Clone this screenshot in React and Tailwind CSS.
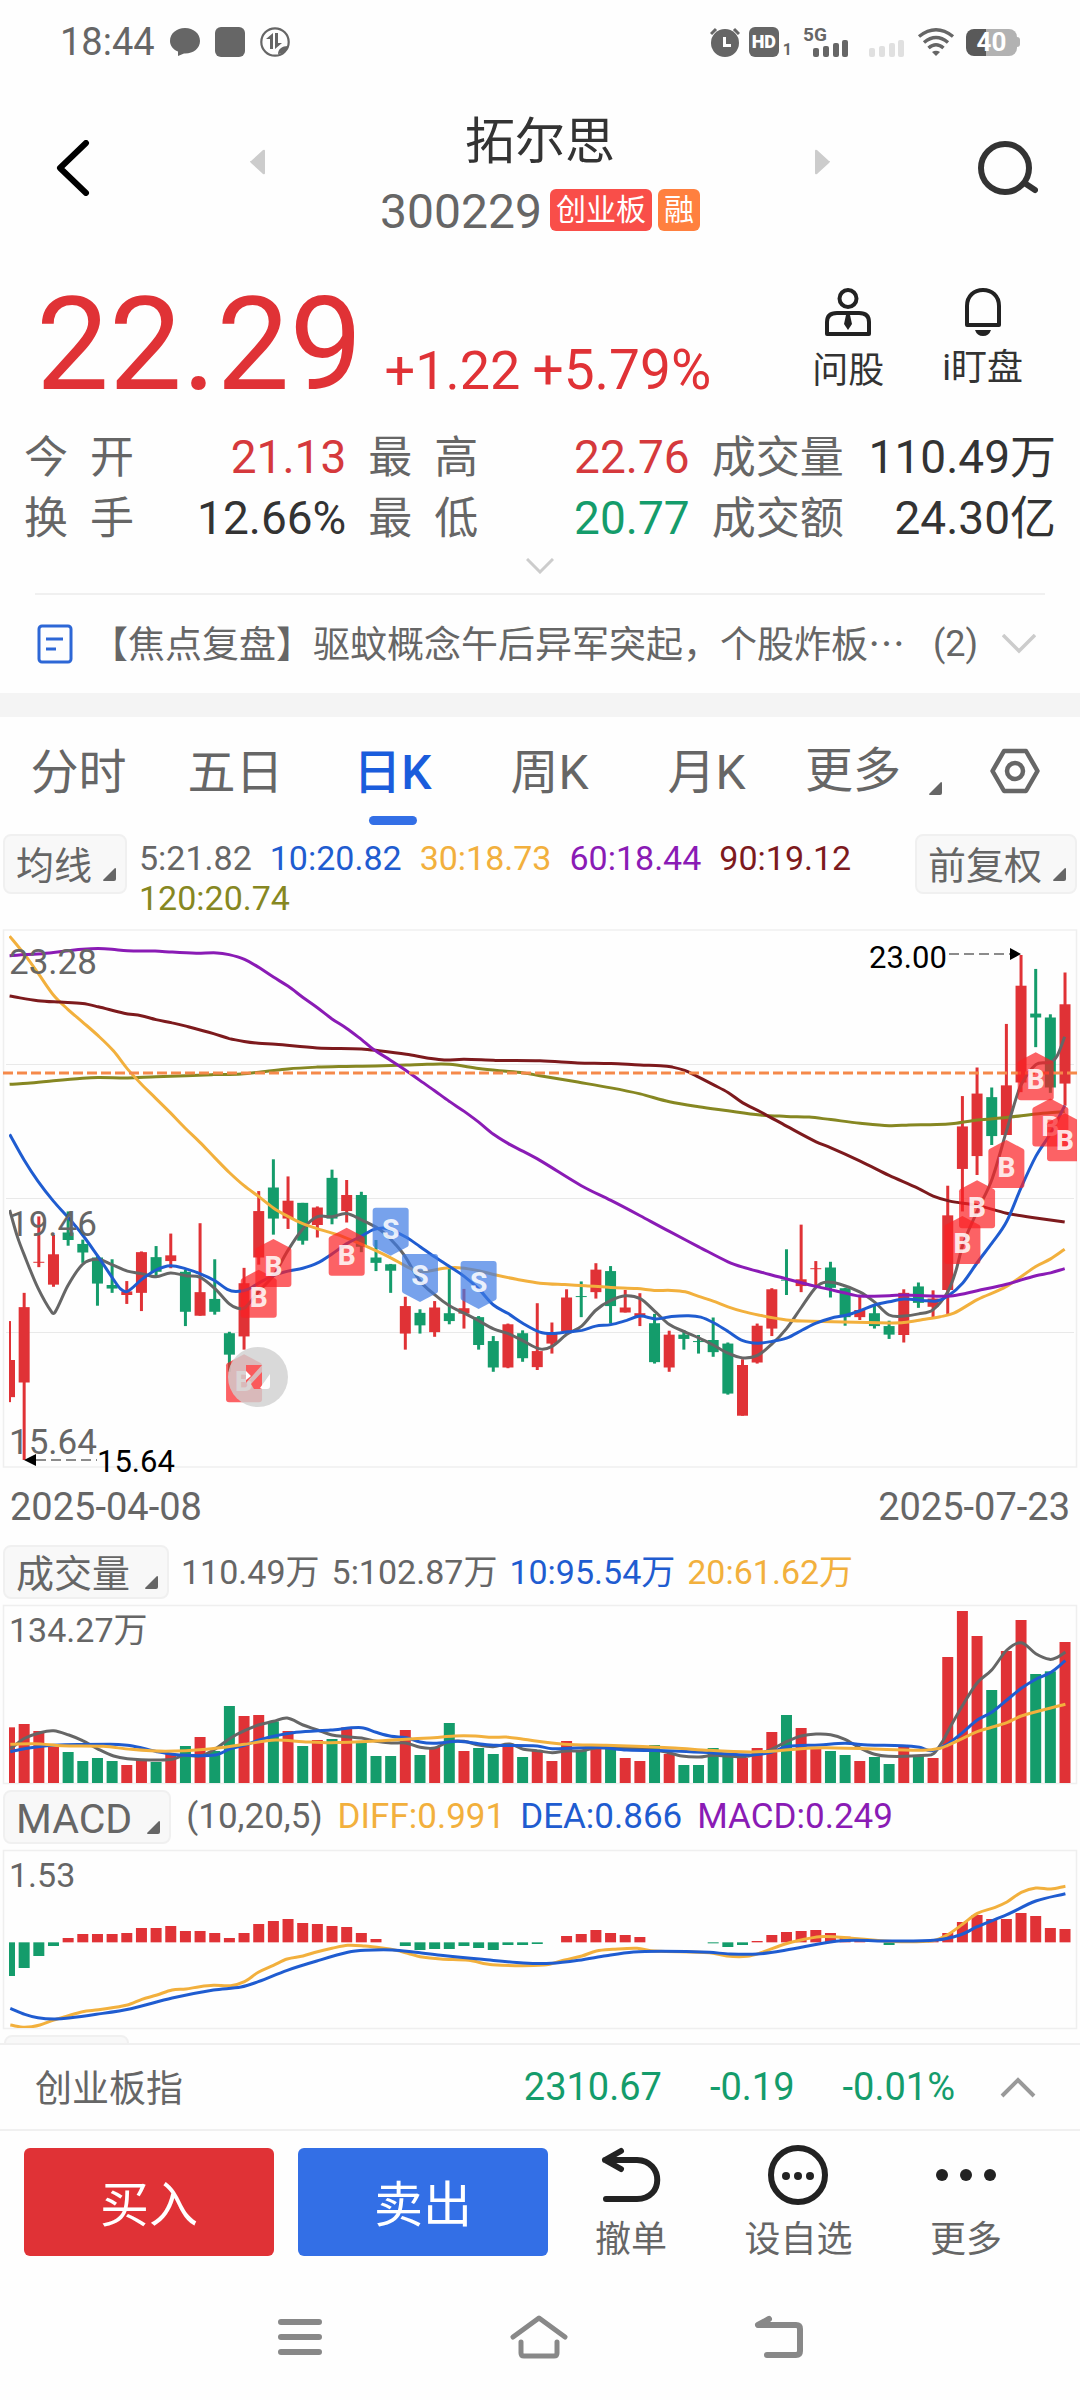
import React from "react";

const RED = "#e03236";
const GREEN = "#149c6b";
const GREY = "#666666";
const BLUE = "#1f5cd0";
const AMBER = "#f2b03d";
const PURPLE = "#8a1bb5";
const MAROON = "#7d1a1d";
const OLIVE = "#868722";

const STEP = 14.66;
const slotX = (i) => 9.5 + i * STEP;

// Smooth curve through [x, y] pairs
function curve(flat, sx, sy) {
  const p = [];
  for (let i = 0; i < flat.length; i += 2) p.push([sx(flat[i]), sy(flat[i + 1])]);
  const slope = p.map((_, i) => {
    const a = p[Math.max(0, i - 1)];
    const b = p[Math.min(p.length - 1, i + 1)];
    return (b[1] - a[1]) / (b[0] - a[0]);
  });
  let d = `M${p[0][0].toFixed(1)} ${p[0][1].toFixed(1)}`;
  for (let i = 1; i < p.length; i++) {
    const h = (p[i][0] - p[i - 1][0]) / 3;
    d += `C${(p[i - 1][0] + h).toFixed(1)} ${(p[i - 1][1] + slope[i - 1] * h).toFixed(1)} ${(p[i][0] - h).toFixed(1)} ${(p[i][1] - slope[i] * h).toFixed(1)} ${p[i][0].toFixed(1)} ${p[i][1].toFixed(1)}`;
  }
  return d;
}

// One row per trading day: up (1) or down (0), high, body top, body bottom, low
const CANDLES = [
  [1, 1123, 1232, 1336, 1350], [1, 1044, 1084, 1295, 1512], [1, 830, 957, 958, 972], [1, 882, 936, 1021, 1027],
  [0, 816, 875, 896, 912], [0, 895, 907, 931, 960], [0, 938, 945, 1018, 1080], [0, 950, 1022, 1032, 1044],
  [1, 1011, 1040, 1050, 1075], [1, 928, 930, 1044, 1095], [0, 913, 944, 985, 1000], [1, 878, 939, 955, 975],
  [0, 980, 985, 1097, 1137], [1, 849, 1042, 1108, 1108], [0, 950, 1061, 1097, 1105], [0, 1153, 1157, 1217, 1265],
  [1, 974, 1017, 1166, 1203], [1, 759, 815, 945, 965], [0, 670, 749, 836, 881], [1, 718, 786, 836, 865],
  [0, 792, 792, 898, 909], [1, 802, 805, 854, 889], [0, 699, 722, 836, 852], [1, 728, 770, 815, 847],
  [0, 761, 770, 915, 930], [0, 896, 945, 960, 983], [0, 963, 964, 982, 1044], [1, 1055, 1081, 1158, 1203],
  [0, 1090, 1100, 1135, 1158], [1, 1067, 1085, 1154, 1167], [0, 970, 1101, 1123, 1132], [1, 1033, 1087, 1102, 1144],
  [0, 1109, 1112, 1190, 1203], [0, 1165, 1179, 1253, 1265], [1, 1130, 1132, 1253, 1255], [0, 1149, 1157, 1227, 1237],
  [1, 1073, 1207, 1252, 1260], [1, 1127, 1157, 1186, 1214], [1, 1034, 1057, 1152, 1160], [0, 1012, 1053, 1054, 1112],
  [1, 961, 979, 1042, 1060], [0, 969, 983, 1081, 1130], [1, 1036, 1085, 1099, 1099], [1, 1045, 1101, 1109, 1137],
  [0, 1103, 1129, 1238, 1242], [1, 1150, 1161, 1253, 1265], [0, 1148, 1161, 1173, 1203], [0, 1162, 1179, 1181, 1214],
  [0, 1113, 1176, 1210, 1223], [0, 1183, 1186, 1326, 1329], [1, 1230, 1246, 1388, 1388], [1, 1130, 1136, 1239, 1242],
  [1, 1031, 1034, 1144, 1165], [0, 922, 1007, 1009, 1050], [1, 853, 1006, 1025, 1042], [1, 955, 975, 976, 1022],
  [0, 957, 973, 1030, 1057], [0, 1030, 1031, 1112, 1136], [1, 1055, 1092, 1112, 1120], [0, 1080, 1101, 1137, 1144],
  [0, 1122, 1137, 1161, 1173], [1, 1034, 1044, 1162, 1183], [0, 1015, 1026, 1072, 1086], [1, 1037, 1060, 1083, 1112],
  [1, 744, 827, 1036, 1103], [1, 493, 578, 697, 816], [1, 413, 486, 661, 714], [0, 469, 496, 605, 630],
  [1, 291, 463, 602, 602], [1, 98, 184, 455, 482], [0, 137, 262, 273, 356], [0, 264, 273, 469, 484],
  [1, 147, 236, 458, 520],
];

const PRICE_LINES = [
  [OLIVE, [28,460,80,457,155,450,240,443,285,441,370,442,453,439,540,436,620,433,700,431,770,424,836,417,921,412,1006,410,1090,409,1180,406,1240,404,1305,404,1390,416,1450,422,1520,428,1568,436,1678,454,1774,470,1859,487,1944,509,2029,523,2114,534,2208,546,2284,550,2350,552,2413,559,2498,569,2582,576,2640,574,2720,573,2770,570,2838,560,2923,553,3008,543,3092,536]],
  [GREY, [28,812,50,885,70,937,110,1030,150,1098,160,1098,197,1024,240,964,283,950,325,965,370,983,411,990,453,999,495,988,540,996,580,1000,624,1032,666,1075,690,1087,712,1085,751,1040,794,996,836,925,879,865,921,831,964,831,1006,822,1050,840,1092,860,1120,880,1150,910,1177,943,1219,1010,1262,1049,1305,1080,1348,1101,1390,1122,1433,1145,1476,1158,1518,1178,1568,1201,1603,1194,1646,1160,1688,1138,1731,1092,1774,1065,1816,1052,1859,1060,1901,1095,1944,1133,1986,1152,2029,1170,2071,1190,2114,1213,2157,1226,2200,1219,2242,1187,2284,1144,2327,1085,2370,1028,2400,1014,2440,1020,2498,1042,2540,1070,2582,1106,2625,1109,2668,1103,2710,1091,2753,1040,2775,985,2796,910,2838,815,2881,725,2923,590,2944,520,2965,462,3008,405,3051,398,3070,380,3092,327]],
  [AMBER, [28,45,70,95,110,148,155,210,197,250,240,286,285,324,330,367,370,417,411,460,453,500,495,540,538,583,580,622,624,666,666,707,709,744,751,774,794,806,836,830,879,850,930,867,980,881,1030,900,1090,925,1135,946,1180,970,1210,982,1240,984,1290,975,1340,974,1390,982,1440,994,1500,1006,1568,1017,1640,1021,1700,1024,1774,1029,1850,1032,1900,1037,1950,1037,1990,1041,2029,1054,2071,1067,2114,1083,2157,1096,2208,1107,2284,1120,2330,1123,2450,1126,2582,1128,2625,1127,2680,1119,2730,1111,2770,1101,2838,1063,2923,1026,3008,970,3051,949,3092,922]],
  [MAROON, [28,213,110,226,175,230,240,234,285,243,360,261,410,268,453,279,500,288,540,297,620,318,666,332,709,340,751,345,800,348,921,358,1050,361,1100,366,1180,376,1240,386,1290,392,1348,390,1440,393,1568,394,1678,400,1774,402,1859,406,1918,408,1953,412,1988,421,2029,440,2071,461,2114,483,2157,512,2208,537,2284,577,2370,621,2413,638,2498,675,2582,715,2668,752,2710,773,2758,787,2838,799,2923,821,3008,834,3092,846]],
  [BLUE, [28,600,70,672,110,731,155,787,197,832,240,882,283,940,325,1000,350,1033,370,1040,411,1007,453,980,495,968,540,977,580,990,624,1010,660,1034,685,1040,720,1034,760,1012,794,996,836,983,879,975,921,961,964,935,1006,907,1050,885,1085,867,1125,864,1177,887,1219,914,1262,943,1305,970,1348,998,1390,1033,1433,1078,1476,1102,1518,1129,1568,1154,1603,1158,1650,1153,1690,1149,1730,1137,1774,1133,1820,1121,1859,1109,1905,1117,1950,1110,2000,1108,2035,1112,2071,1127,2114,1152,2157,1178,2200,1185,2242,1180,2284,1171,2330,1148,2370,1129,2413,1115,2460,1106,2498,1094,2540,1078,2582,1069,2625,1061,2680,1065,2720,1067,2753,1053,2796,1016,2838,959,2881,904,2923,845,2965,750,3008,662,3051,597,3092,520]],
  [PURPLE, [28,100,70,97,110,95,155,91,200,86,240,82,285,80,325,82,370,86,450,87,500,90,570,93,630,92,665,97,710,110,750,132,794,160,836,185,880,217,921,245,964,277,1006,303,1050,335,1085,363,1135,393,1177,420,1219,449,1262,478,1305,508,1348,536,1390,566,1433,600,1476,626,1518,647,1568,673,1688,744,1774,785,1859,828,1944,872,2029,915,2114,957,2157,972,2218,988,2284,1005,2370,1026,2448,1043,2497,1053,2582,1052,2625,1050,2710,1053,2768,1052,2838,1038,2923,1020,3008,996,3051,988,3092,976]],
];

// Trade marks: kind, day, level of the mark's top edge
const MARKS = [
  ["B", 16, 1216], ["B", 17, 979], ["B", 18, 893], ["B", 23, 862], ["S", 26, 806], ["S", 28, 935], ["S", 32, 955],
  ["B", 65, 829], ["B", 66, 729], ["B", 68, 616], ["B", 70, 370], ["B", 71, 500], ["B", 72, 541],
];

const VOLUMES = [742,732,753,801,816,843,834,843,855,840,846,822,798,771,813,678,708,705,724,753,798,780,777,742,784,828,828,750,825,801,729,813,804,822,799,831,813,843,783,810,799,805,834,843,795,822,855,855,804,825,834,804,756,705,744,807,813,825,843,831,852,798,825,834,531,393,468,630,513,420,582,574,486];

const VOLUME_LINES = [
  [GREY, [15,806,36,775,58,758,78,752,100,765,120,782,143,808,165,828,185,836,228,840,250,838,268,826,290,828,310,810,335,774,355,752,375,735,397,724,417,714,440,735,461,750,482,765,503,770,525,774,546,784,568,789,589,789,610,802,631,804,652,785,674,784,695,795,716,800,740,792,760,808,780,812,802,818,822,813,845,812,866,804,908,804,940,808,965,815,990,828,1015,831,1035,826,1078,830,1100,822,1120,808,1142,785,1163,768,1185,762,1206,764,1227,778,1248,803,1270,823,1290,829,1345,826,1356,820,1370,780,1376,755,1398,675,1419,608,1440,570,1462,510,1483,488,1504,521,1524,538,1535,532,1547,516]],
  [BLUE, [15,815,40,805,78,796,160,793,185,796,206,804,228,815,250,823,270,826,313,825,335,806,355,796,375,781,397,769,430,757,480,750,525,743,546,757,568,769,590,773,610,786,631,790,665,784,695,791,720,796,780,798,802,806,866,802,910,810,980,813,1035,819,1090,825,1120,817,1142,800,1190,795,1227,790,1260,795,1310,797,1335,802,1352,812,1376,792,1398,757,1419,720,1440,697,1462,660,1483,625,1504,598,1526,577,1547,542]],
  [AMBER, [15,793,50,791,90,797,150,799,190,808,240,814,300,808,355,793,400,780,440,785,480,788,540,784,600,776,630,773,660,768,690,768,715,772,735,771,760,778,820,793,880,796,980,804,1030,811,1090,816,1130,812,1163,806,1200,803,1300,809,1340,811,1365,805,1376,796,1398,775,1419,755,1440,742,1462,728,1483,708,1547,673]],
];

const ZERO = 487;
const MACD_BARS = [588,564,528,498,474,462,462,462,459,444,444,438,453,453,459,474,459,432,423,417,429,432,438,441,459,477,487,498,510,507,507,498,504,510,495,495,492,487,468,462,450,459,465,471,487,487,487,487,490,501,495,483,465,456,453,450,459,470,479,487,495,487,487,480,459,426,405,417,417,399,408,444,447];

const MACD_LINES = [
  [AMBER, [15,735,36,742,58,735,78,720,98,708,120,695,143,689,185,675,206,658,228,645,250,630,270,627,290,620,310,616,335,617,355,605,375,577,397,556,417,537,440,528,461,515,482,505,505,496,530,498,555,504,575,511,595,522,610,530,640,537,680,541,715,554,790,555,820,540,845,528,866,513,890,508,925,505,950,513,1030,518,1055,528,1085,529,1105,518,1140,492,1163,480,1190,470,1215,471,1250,477,1290,484,1355,482,1376,464,1398,432,1419,400,1445,382,1462,366,1483,337,1504,324,1526,327,1547,319]],
  [BLUE, [15,685,36,703,55,713,78,717,100,714,140,703,190,686,250,654,310,630,350,621,375,605,417,571,460,543,505,517,530,511,570,510,600,516,640,526,700,538,760,549,800,550,840,541,880,527,920,516,960,514,1030,517,1060,522,1100,522,1140,511,1206,486,1240,481,1290,483,1360,480,1395,464,1419,440,1462,404,1504,363,1547,341]],
];

const level = (v) => v / 2.8 - 9;
const priceX = (v) => v / 2.904;
const paneX = (v) => v / 1.452;
const volumeY = (v) => v / 3 - 124;
const macdY = (v) => v / 3 - 69;

function Lines({ lines, sx, sy }) {
  return lines.map(([color, pts]) => (
    <path key={color} d={curve(pts, sx, sy)} fill="none" stroke={color} strokeWidth="3" strokeLinejoin="round" />
  ));
}

function Mark({ kind, day, top }) {
  const x = slotX(day);
  const y = level(top);
  const buy = kind === "B";
  return (
    <g transform={`translate(${x} ${y})`}>
      <path
        d={buy ? "M0 0 L17 9Q18 10 18 11V45Q18 48 15 48H-15Q-18 48-18 45V11Q-18 10-17 9Z" : "M-15 0H15Q18 0 18 3V37Q18 38 17 39L0 48L-17 39Q-18 38-18 37V3Q-18 0-15 0Z"}
        fill={buy ? "#fb2024" : "#3d7ae4"}
        fillOpacity="0.7"
      />
      <text x="0" y={buy ? 37 : 31} textAnchor="middle" fontSize="28" fontWeight="800" fill="#fff" fillOpacity="0.85">
        {kind}
      </text>
    </g>
  );
}

function PriceChart() {
  return (
    <svg viewBox="0 0 1080 556" className="block w-full h-auto font-[Roboto,sans-serif]" role="img" aria-label="日K线图">
      <clipPath id="plot"><rect x="9" y="0" width="1068" height="546" /></clipPath>
      <rect x="3.5" y="1" width="1073" height="537" fill="none" stroke="#efefef" strokeWidth="1.5" />
      {[135, 269, 403].map((y) => <path key={y} d={`M6 ${y}.5H1074`} stroke="#e9e9e9" />)}
      <g clipPath="url(#plot)">
        {CANDLES.map(([up, h, t, b, l], i) => {
          const c = up ? RED : GREEN;
          return (
            <g key={i} fill={c}>
              <rect x={slotX(i) - 1.5} y={level(h)} width="3" height={(l - h) / 2.8} />
              <rect x={slotX(i) - 5.5} y={level(t)} width="11" height={Math.max(1, (b - t) / 2.8)} />
            </g>
          );
        })}
        <Lines lines={PRICE_LINES} sx={priceX} sy={level} />
      </g>
      <path d="M3 144H1077" stroke="#f5894a" strokeWidth="3" strokeDasharray="10 4" />
      <g fontSize="35" fill={GREY}>
        <text x="9" y="45">23.28</text>
        <text x="9" y="307">19.46</text>
        <text x="9" y="525">15.64</text>
      </g>
      <g clipPath="url(#plot)">
        {MARKS.map(([k, d, t]) => <Mark key={d} kind={k} day={d} top={t} />)}
      </g>
      <circle cx="258" cy="448" r="30" fill="#cfcfcf" fillOpacity="0.8" />
      <path d="M246 436H262L246 454ZM262 443V460H254L251 455Z" fill="#fa5a5c" />
      <path d="M246 442L251 447L246 451ZM260 459L270 445V457Q270 460 267 460H262Z" fill="#fff" />
      <path d="M36 531H97M949 25H1010" stroke="#666" strokeWidth="1.5" strokeDasharray="10 5" />
      <path d="M24 531L36 525V537ZM1021 25L1010 19V31Z" fill="#000" />
      <g fontSize="31" fill="#000">
        <text x="97" y="543">15.64</text>
        <text x="869" y="39">23.00</text>
      </g>
    </svg>
  );
}

function VolumeChart() {
  return (
    <svg viewBox="0 0 1080 182" className="block w-full h-auto font-[Roboto,'Noto_Sans_CJK_SC',sans-serif]" role="img" aria-label="成交量图">
      <clipPath id="volume"><rect x="9" y="0" width="1068" height="182" /></clipPath>
      <rect x="3.5" y="1.5" width="1073" height="178" fill="none" stroke="#efefef" strokeWidth="1.5" />
      <text x="9" y="38" fontSize="34" fill={GREY}>134.27万</text>
      <g clipPath="url(#volume)">
        {VOLUMES.map((v, i) => (
          <rect key={i} x={slotX(i) - 5.5} y={volumeY(v)} width="11" height={(909 - v) / 3} fill={CANDLES[i][0] ? RED : GREEN} />
        ))}
        <Lines lines={VOLUME_LINES} sx={paneX} sy={volumeY} />
      </g>
    </svg>
  );
}

function MacdChart() {
  return (
    <svg viewBox="0 0 1080 182" className="block w-full h-auto font-[Roboto,sans-serif]" role="img" aria-label="MACD图">
      <clipPath id="macd"><rect x="9" y="2" width="1068" height="177" /></clipPath>
      <rect x="3.5" y="1.5" width="1073" height="178" fill="none" stroke="#efefef" strokeWidth="1.5" />
      <text x="9" y="38" fontSize="34" fill={GREY}>1.53</text>
      <g clipPath="url(#macd)">
        {MACD_BARS.map((v, i) => (
          <rect key={i} x={slotX(i) - 5.5} y={macdY(Math.min(v, ZERO))} width="11" height={Math.abs(v - ZERO) / 3} fill={v < ZERO ? RED : GREEN} />
        ))}
        <Lines lines={MACD_LINES} sx={paneX} sy={macdY} />
      </g>
    </svg>
  );
}

function Corner({ className }) {
  return (
    <svg viewBox="0 0 13 13" className={className} fill="#666" aria-hidden="true">
      <path d="M12 0Q13 0 13 1V11Q13 13 11 13H1Q0 13 0 12Z" />
    </svg>
  );
}

function PickButton({ children, className = "" }) {
  return (
    <button className={`flex shrink-0 items-center rounded-lg border-2 border-[#f0f0f0] bg-[#f8f8f8] pl-[11px] pr-[9px] pt-1 text-[38px] leading-none text-[#666] ${className}`}>
      {children}
      <Corner className="ml-[15px] mt-[16px] h-[13px] w-[13px]" />
    </button>
  );
}

function StatusBar() {
  return (
    <div className="flex h-[84px] items-center justify-between pl-[60px] pr-[60px] text-[#666]">
      <div className="flex items-center gap-[15px]">
        <span className="text-[38px] leading-none">18:44</span>
        <svg viewBox="0 0 30 30" className="h-[30px] w-[30px]" fill="currentColor" aria-hidden="true">
          <path d="M15 1C6.500 1 0 6.500 0 14c0 4.500 3 8.500 8 10.500V29l6-2.500C23 27 30 21.500 30 14 30 6.500 23.500 1 15 1Z" />
        </svg>
        <span className="h-[30px] w-[30px] rounded-md bg-[#666]" />
        <svg viewBox="0 0 30 30" className="h-[30px] w-[30px]" aria-hidden="true">
          <circle cx="15" cy="15" r="13.700" fill="none" stroke="currentColor" strokeWidth="2.200" />
          <path d="M13 6v16h-3V12H6zM15 6h3v10h4l-7 6z" fill="currentColor" />
          <path d="M18 27c0-5 4-8 10-8-1 4-5 8-10 8Z" fill="currentColor" />
        </svg>
      </div>
      <div className="flex items-center">
        <svg viewBox="0 0 30 30" className="h-[30px] w-[30px]" aria-hidden="true">
          <circle cx="15" cy="16" r="14" fill="currentColor" />
          <path d="M1 7L6 2M29 7L24 2" stroke="currentColor" strokeWidth="3" />
          <path d="M14.500 10v8.500H21" fill="none" stroke="#fff" strokeWidth="3" />
        </svg>
        <span className="ml-[9px] flex h-[30px] w-[30px] items-center justify-center rounded-md bg-[#666] text-[18px] font-black leading-none text-white">HD</span>
        <span className="ml-[4px] self-end text-[16px] font-bold leading-none">1</span>
        <svg viewBox="0 0 46 32" className="ml-[12px] h-8 w-[46px] overflow-visible" fill="currentColor" aria-hidden="true">
          <text x="-1" y="15" fontSize="19" fontWeight="700">5G</text>
          <rect x="9" y="22" width="6" height="9" rx="2" />
          <rect x="19" y="20" width="6" height="11" rx="2" />
          <rect x="29" y="17" width="6" height="14" rx="2" />
          <rect x="38" y="14" width="6" height="17" rx="2" />
        </svg>
        <svg viewBox="0 0 36 32" className="ml-[19px] h-8 w-9" fill="#e0e0e0" aria-hidden="true">
          <rect x="0" y="22" width="6" height="9" rx="2" />
          <rect x="10" y="20" width="6" height="11" rx="2" />
          <rect x="20" y="17" width="6" height="14" rx="2" />
          <rect x="29" y="14" width="6" height="17" rx="2" />
        </svg>
        <svg viewBox="0 0 38 30" className="ml-[12px] h-[30px] w-[38px]" fill="none" stroke="currentColor" strokeWidth="3.500" aria-hidden="true">
          <path d="M2 9.500Q19-4 36 9.500M7 15.500Q19 5.500 31 15.500M11.500 21Q19 14.500 26.500 21" />
          <path d="M15 25Q19 22.500 23 25L19 29Z" fill="currentColor" stroke="none" />
        </svg>
        <span className="ml-[11px] flex h-[27px] w-[51px] items-center justify-center rounded-lg bg-linear-to-r from-[#595959] from-40% to-[#b2b2b2] to-40% text-[26px] font-bold leading-none text-white">40</span>
        <span className="h-[10px] w-[3px] rounded-r bg-[#b2b2b2]" />
      </div>
    </div>
  );
}

function Header() {
  return (
    <header className="flex h-[168px] items-center justify-between pl-[56px] pr-[42px]">
      <button aria-label="返回" className="w-[46px]">
        <svg viewBox="0 0 34 56" className="h-14 w-[34px]" fill="none" stroke="#000" strokeWidth="6" strokeLinecap="round" strokeLinejoin="round">
          <path d="M30 3L4 28L30 53" />
        </svg>
      </button>
      <div className="flex w-[580px] items-center justify-between">
        <button aria-label="上一只" className="-mt-3">
          <svg viewBox="0 0 16 26" className="h-[26px] w-4" fill="#ccc"><path d="M0 12Q0 13 1 14L13 25Q15 26 15 24V2Q15 0 13 1L1 12Z" /></svg>
        </button>
        <div className="flex flex-col items-center pt-[10px]">
          <h1 className="text-[50px] leading-[60px] text-[#333]">拓尔思</h1>
          <div className="mt-[14px] flex h-12 items-center">
            <span className="pt-1 text-[48px] leading-none text-[#666]">300229</span>
            <span className="ml-[8px] flex h-[42px] items-center rounded-md bg-[#f94e49] px-[6px] text-[30px] leading-none text-white">创业板</span>
            <span className="ml-[6px] flex h-[42px] items-center rounded-md bg-[#ff803f] px-[6px] text-[30px] leading-none text-white">融</span>
          </div>
        </div>
        <button aria-label="下一只" className="-mt-3">
          <svg viewBox="0 0 16 26" className="h-[26px] w-4" fill="#ccc"><path d="M16 12Q16 13 15 14L3 25Q1 26 1 24V2Q1 0 3 1L15 12Z" /></svg>
        </button>
      </div>
      <button aria-label="搜索" className="w-[60px]">
        <svg viewBox="0 0 60 54" className="h-[54px] w-[60px]" fill="none" stroke="#333" strokeWidth="6">
          <circle cx="27" cy="27" r="24" />
          <path d="M48 43L57 49" strokeLinecap="round" />
        </svg>
      </button>
    </header>
  );
}

function Quote() {
  return (
    <section className="flex h-[158px] justify-between pl-[36px] pr-[57px] pt-[28px]">
      <div className="flex items-baseline text-[#e03236]">
        <strong className="text-[130px] font-normal leading-none">22.29</strong>
        <span className="ml-[22px] text-[54px] leading-none">+1.22</span>
        <span className="ml-[12px] text-[55px] leading-none">+5.79%</span>
      </div>
      <div className="flex gap-[58px] pt-[8px] text-[36px] leading-none text-[#333]">
        <button className="flex flex-col items-center self-start">
          <svg viewBox="0 0 46 48" className="h-12 w-[46px]" fill="none" stroke="#222" strokeWidth="4" aria-hidden="true">
            <circle cx="23" cy="10.500" r="8.500" />
            <path d="M2 46V34Q2 25 12 25H34Q44 25 44 34V46Z" strokeLinejoin="round" />
            <path d="M21 27h4l2 9-4 6-4-6z" fill="#222" stroke="none" />
          </svg>
          <span className="mt-[17px]">问股</span>
        </button>
        <button className="flex flex-col items-center self-start">
          <svg viewBox="0 0 36 48" className="h-12 w-9" fill="none" stroke="#222" strokeWidth="4" aria-hidden="true">
            <path d="M2 37V18C2 8 9 2 18 2S34 8 34 18V37Z" strokeLinejoin="round" />
            <path d="M10 42H26Q24 48 18 48T10 42Z" fill="#222" stroke="none" />
          </svg>
          <span className="mt-[14px]">i盯盘</span>
        </button>
      </div>
    </section>
  );
}

const STATS = [
  ["今开", "21.13", "text-[#d5393c]"], ["最高", "22.76", "text-[#d5393c]"], ["成交量", "110.49万", "text-[#333]"],
  ["换手", "12.66%", "text-[#333]"], ["最低", "20.77", "text-[#149c6b]"], ["成交额", "24.30亿", "text-[#333]"],
];

function Stats() {
  return (
    <section className="px-6 pt-[17px]">
      <dl className="grid grid-cols-[322fr_321fr_344fr] gap-x-[22px] text-[44px] leading-[60px]">
        {STATS.map(([label, value, tone]) => (
          <div key={label} className="flex items-baseline justify-between">
            <dt className={label.length === 2 ? "flex w-[110px] justify-between text-[#666]" : "text-[#666]"}>
              {label.length === 2 ? label.split("").map((c) => <span key={c}>{c}</span>) : label}
            </dt>
            <dd className={`text-[46px] ${tone}`}>{value}</dd>
          </div>
        ))}
      </dl>
      <button aria-label="展开" className="mx-auto flex h-[44px] items-center pb-[10px]">
        <svg viewBox="0 0 28 16" className="h-4 w-7" fill="none" stroke="#ccc" strokeWidth="3"><path d="M1 1L14 14L27 1" /></svg>
      </button>
    </section>
  );
}

const TABS = ["分时", "五日", "日K", "周K", "月K"];

function Tabs() {
  return (
    <nav className="flex h-[108px] items-stretch pr-[40px] text-[48px] leading-[112px] text-[#666]">
      {TABS.map((t) => (
        <button key={t} className={t === "日K" ? "relative flex-1 font-medium text-[#1a5cdc]" : "flex-1"}>
          {t}
          {t === "日K" && <span className="absolute bottom-0 left-1/2 h-[9px] w-12 -translate-x-1/2 rounded-full bg-[#336fe6]" />}
        </button>
      ))}
      <button className="ml-[20px] flex items-center">
        更多
        <Corner className="ml-[28px] mt-[34px] h-[13px] w-[13px]" />
      </button>
      <button aria-label="设置" className="ml-[48px] flex items-center">
        <svg viewBox="0 0 50 46" className="h-[46px] w-[50px]" fill="none" stroke="#666" strokeWidth="4.500" strokeLinejoin="round">
          <path d="M14 3H36L47.500 23L36 43H14L2.500 23Z" />
          <circle cx="25" cy="23" r="8" />
        </svg>
      </button>
    </nav>
  );
}

function Action({ label, children }) {
  return (
    <button className="flex flex-col items-center text-[36px] leading-[36px] text-[#666]">
      <span className="flex h-[60px] items-center">{children}</span>
      <span className="mt-[17px]">{label}</span>
    </button>
  );
}

export default function App() {
  return (
    <main className="min-h-screen w-full overflow-hidden bg-[#fefefe] font-[Roboto,'Noto_Sans_CJK_SC',sans-serif]">
      <StatusBar />
      <Header />
      <Quote />
      <Stats />

      <a href="#news" className="mx-[35px] flex h-[100px] items-center border-t-2 border-[#f0f0f0] text-[#666]">
        <svg viewBox="0 0 36 40" className="ml-[2px] h-10 w-9 shrink-0" fill="none" stroke="#2d67d6" strokeWidth="3" aria-hidden="true">
          <rect x="2" y="2" width="32" height="36" rx="3" />
          <path d="M9 15H26M9 25H19" />
        </svg>
        <span className="ml-[18px] min-w-0 flex-1 whitespace-nowrap pb-1 font-['Noto_Sans_CJK_SC',sans-serif] text-[37px] leading-[60px]">【焦点复盘】驱蚊概念午后异军突起，个股炸板⋯</span>
        <span className="text-[36px]">(2)</span>
        <svg viewBox="0 0 34 20" className="ml-[24px] mr-[9px] h-5 w-[34px] shrink-0" fill="none" stroke="#ccc" strokeWidth="3.500" aria-hidden="true"><path d="M1 1L17 17L33 1" /></svg>
      </a>
      <div className="h-6 bg-[#f4f4f4]" />

      <Tabs />

      <div className="flex h-[104px] items-start px-[3px] pt-[9px]">
        <PickButton className="h-[60px]"><span className="-mr-1">均线</span></PickButton>
        <div className="ml-[12px] flex flex-1 flex-wrap content-start gap-x-[18px] pt-[4px] text-[34px] leading-[40px]">
          <span className="text-[#666]">5:21.82</span>
          <span className="text-[#1f5cd0]">10:20.82</span>
          <span className="text-[#f2b03d]">30:18.73</span>
          <span className="text-[#8a1bb5]">60:18.44</span>
          <span className="text-[#7d1a1d]">90:19.12</span>
          <span className="text-[#868722]">120:20.74</span>
        </div>
        <PickButton className="h-[60px]"><span className="-mr-1">前复权</span></PickButton>
      </div>
      <PriceChart />
      <div className="flex h-[60px] items-start justify-between px-[10px] pt-[3px] text-[38px] leading-[38px] text-[#666]">
        <time>2025-04-08</time>
        <time>2025-07-23</time>
      </div>

      <div className="flex h-[59px] items-start px-[3px] text-[34px] leading-[54px]">
        <PickButton className="h-[54px]">成交量</PickButton>
        <div className="ml-[12px] flex gap-[12px]">
          <span className="text-[#666]">110.49万</span>
          <span className="text-[#666]">5:102.87万</span>
          <span className="text-[#1f5cd0]">10:95.54万</span>
          <span className="text-[#f2b03d]">20:61.62万</span>
        </div>
      </div>
      <VolumeChart />

      <div className="mt-[4px] flex h-[59px] items-start px-[3px] text-[35px] leading-[54px]">
        <PickButton className="h-[54px]"><span className="text-[41px]">MACD</span></PickButton>
        <div className="ml-[15px] flex gap-[15px]">
          <span className="text-[#666]">(10,20,5)</span>
          <span className="text-[#f2b03d]">DIFF:0.991</span>
          <span className="text-[#1f5cd0]">DEA:0.866</span>
          <span className="text-[#8a1bb5]">MACD:0.249</span>
        </div>
      </div>
      <MacdChart />
      <div className="h-[12px] overflow-hidden px-1 pt-[4px]">
        <div className="h-5 w-[125px] rounded-lg border-2 border-[#f0f0f0] bg-[#f8f8f8]" />
      </div>

      <section className="flex h-[88px] items-center border-y-2 border-[#f0f0f0] pl-[35px] pr-[44px] text-[38px] leading-none text-[#149c6b]">
        <span className="flex-1 pt-1 text-[37px] text-[#666]">创业板指</span>
        <span>2310.67</span>
        <span className="ml-[48px]">-0.19</span>
        <span className="ml-[48px]">-0.01%</span>
        <button aria-label="展开指数" className="ml-[45px]">
          <svg viewBox="0 0 36 22" className="h-[22px] w-9" fill="none" stroke="#999" strokeWidth="4"><path d="M2 20L18 4L34 20" /></svg>
        </button>
      </section>

      <section className="flex items-start pl-6 pt-[17px]">
        <button className="h-[108px] w-[250px] rounded-md bg-[#e03236] pt-2 text-[49px] text-white">买入</button>
        <button className="ml-6 h-[108px] w-[250px] rounded-md bg-[#336fe6] pt-2 text-[49px] text-white">卖出</button>
        <div className="-mt-[3px] ml-[47px] mr-[78px] flex flex-1 justify-between">
          <Action label="撤单">
            <svg viewBox="0 0 60 56" className="h-14 w-[60px]" fill="none" stroke="#222" strokeWidth="6" strokeLinecap="round" strokeLinejoin="round">
              <path d="M20 4L4 13L20 22M4 13H36C63 14 63 52 36 52H5" />
            </svg>
          </Action>
          <Action label="设自选">
            <svg viewBox="0 0 60 60" className="h-[60px] w-[60px]" fill="#222">
              <circle cx="30" cy="30" r="27" fill="none" stroke="#222" strokeWidth="6" />
              <circle cx="18" cy="31" r="4" /><circle cx="30" cy="31" r="4" /><circle cx="42" cy="31" r="4" />
            </svg>
          </Action>
          <Action label="更多">
            <svg viewBox="0 0 60 12" className="h-3 w-[60px]" fill="#222">
              <circle cx="6" cy="6" r="6" /><circle cx="30" cy="6" r="6" /><circle cx="54" cy="6" r="6" />
            </svg>
          </Action>
        </div>
      </section>

      <nav className="mt-[57px] flex items-center justify-between px-[276px]">
        <button aria-label="最近任务">
          <svg viewBox="0 0 48 44" className="h-11 w-12" stroke="#888" strokeWidth="6" strokeLinecap="round"><path d="M5 7H43M5 22H43M5 37H43" /></svg>
        </button>
        <button aria-label="主屏幕">
          <svg viewBox="0 0 58 44" className="h-11 w-[58px]" fill="none" stroke="#888" strokeWidth="5" strokeLinecap="round" strokeLinejoin="round">
            <path d="M3 22L29 3L55 22M11 27V38Q11 41 14 41H44Q47 41 47 38V27" />
          </svg>
        </button>
        <button aria-label="返回上一页">
          <svg viewBox="0 0 50 44" className="h-11 w-[50px]" fill="none" stroke="#888" strokeWidth="6" strokeLinecap="round" strokeLinejoin="round">
            <path d="M15 4L4 10H42Q46 10 46 14V36Q46 40 42 40H13" />
          </svg>
        </button>
      </nav>
    </main>
  );
}
